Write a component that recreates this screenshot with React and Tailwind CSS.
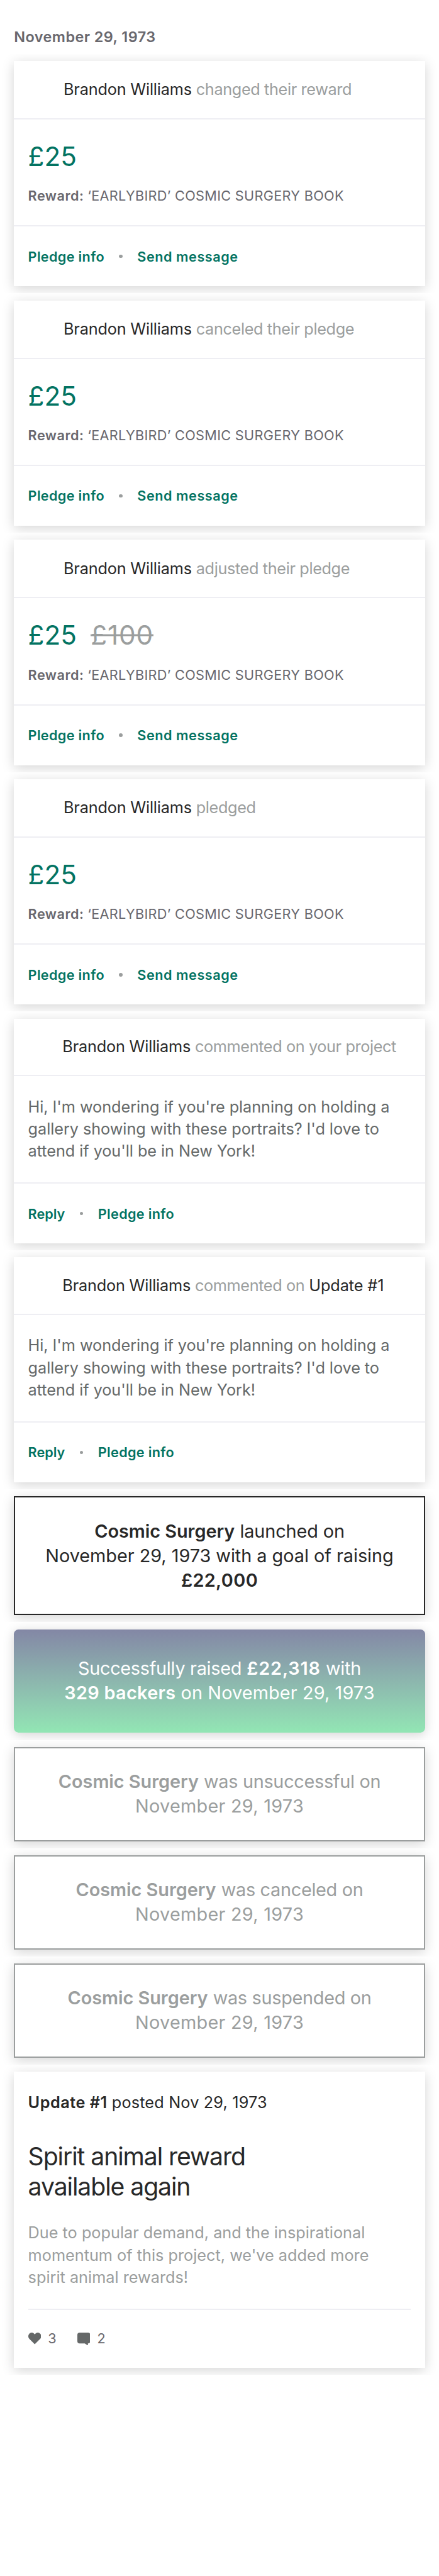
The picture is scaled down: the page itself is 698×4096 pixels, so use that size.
import React from "react";

/* A feed row: clips its card's shadow at the row's edges. */
function Cell({ children }) {
  return <div className="overflow-hidden px-[22.3px] py-[11.17px]">{children}</div>;
}

function Card({ className = "", children }) {
  return (
    <div className={`shadow-[0_3.7px_18.6px_rgba(0,0,0,0.17)] ${className}`}>{children}</div>
  );
}

function Links({ first, firstTracking, second, secondTracking }) {
  return (
    <div className="flex flex-1 items-center gap-[23.5px] px-[22.3px] text-[21.67px] leading-[26px] font-semibold text-[#037362]">
      <a className={firstTracking}>{first}</a>
      <span className="size-[5.4px] rounded-full bg-[#9b9e9e]" />
      <a className={secondTracking}>{second}</a>
    </div>
  );
}

function PledgeCard({ action, tracking = "tracking-[-0.0145em]", oldAmount }) {
  return (
    <Cell>
      <Card className="flex h-[358.4px] flex-col bg-white">
        <div className="flex h-[93.1px] items-center border-b-2 border-[#eeeef3] pl-[78.7px] text-[25.28px] leading-[32px] whitespace-pre">
          <span className="tracking-[-0.0074em] text-[#282828]">Brandon Williams </span>
          <span className={`text-[#9b9e9e] ${tracking}`}>{action}</span>
        </div>
        <div className="h-[170.4px] border-b-2 border-[#eeeef3] px-[22.3px] pt-[33px]">
          <div className="flex gap-[22.3px] text-[42.3px] leading-[52.2px]">
            <span className="text-[#037362]">£25</span>
            {oldAmount && (
              <span className="relative tracking-[0.02em] text-[#9b9e9e]">
                {oldAmount}
                <span className="absolute top-1/2 left-0 h-[3px] w-full -translate-y-1/2 bg-[#9b9e9e]" />
              </span>
            )}
          </div>
          <div className="mt-[23px] text-[21.67px] leading-[26px] whitespace-pre text-[#69686e]">
            <span className="font-semibold tracking-[0.0218em]">Reward: </span>
            <span className="tracking-[0.0145em]">‘EARLYBIRD’ COSMIC SURGERY BOOK</span>
          </div>
        </div>
        <Links
          first="Pledge info"
          firstTracking="tracking-[0.0148em]"
          second="Send message"
          secondTracking="tracking-[0.0245em]"
        />
      </Card>
    </Cell>
  );
}

function CommentCard({ action, target }) {
  return (
    <Cell>
      <Card className="flex h-[357.5px] flex-col bg-white">
        <div className="flex h-[91.2px] items-center border-b-2 border-[#eeeef3] pl-[77px] text-[25.28px] leading-[32px] whitespace-pre">
          <span className="tracking-[-0.0074em] text-[#282828]">Brandon Williams </span>
          <span className="tracking-[-0.0155em] text-[#9b9e9e]">{action}</span>
          {target && <span className="tracking-[-0.004em] text-[#282828]"> {target}</span>}
        </div>
        <div className="flex h-[171.3px] flex-col justify-center border-b-2 border-[#eeeef3] px-[22.3px] text-[25.28px] leading-[35.25px] tracking-[-0.0025em] text-[#656969]">
          <p>
            Hi, I'm wondering if you're planning on holding a
            <br />
            gallery showing with these portraits? I'd love to
            <br />
            attend if you'll be in New York!
          </p>
        </div>
        <Links
          first="Reply"
          firstTracking="tracking-[0em]"
          second="Pledge info"
          secondTracking="tracking-[0.0148em]"
        />
      </Card>
    </Cell>
  );
}

function EndedCard({ state }) {
  return (
    <Cell>
      <Card className="h-[149.9px] border-2 border-[#9b9e9e] bg-white pt-[33px] text-center text-[28.89px] leading-[39px] text-[#9b9e9e]">
        <b className="font-semibold tracking-[-0.0015em]">Cosmic Surgery</b>{" "}
        <span className="tracking-[-0.011em]">{state} on</span>
        <br />
        <span className="tracking-[0.0084em]">November 29, 1973</span>
      </Card>
    </Cell>
  );
}

export default function App() {
  return (
    <div className="h-[4096px] w-[698px] bg-white font-['Inter','Liberation_Sans',sans-serif]">
      <h2 className="h-[85.65px] pt-[44.2px] pl-[22.3px] text-[23.47px] leading-[30px] font-semibold tracking-[0.0176em] text-[#69686e]">
        November 29, 1973
      </h2>

      <PledgeCard action="changed their reward" />
      <PledgeCard action="canceled their pledge" />
      <PledgeCard action="adjusted their pledge" oldAmount="£100" />
      <PledgeCard action="pledged" />
      <CommentCard action="commented on your project" />
      <CommentCard action="commented on" target="Update #1" />

      <Cell>
        <Card className="h-[189px] border-2 border-[#282828] bg-white pt-[33.4px] text-center text-[28.89px] leading-[39px] text-[#282828]">
          <b className="font-semibold tracking-[-0.0015em]">Cosmic Surgery</b>{" "}
          <span className="tracking-[-0.0047em]">launched on</span>
          <br />
          <span className="tracking-[-0.0017em]">November 29, 1973 with a goal of raising</span>
          <br />
          <b className="font-semibold tracking-[0.0123em]">£22,000</b>
        </Card>
      </Cell>

      <Cell>
        <Card className="h-[164.8px] rounded-[7.4px] bg-linear-to-b from-[#8387a5] to-[#92e6b4] pt-[42.6px] text-center text-[28.89px] leading-[39px] text-white">
          <span className="tracking-[-0.0106em]">Successfully raised</span>{" "}
          <b className="font-semibold tracking-[0.0293em]">£22,318</b>{" "}
          <span className="tracking-[-0.01em]">with</span>
          <br />
          <b className="font-semibold tracking-[0.0098em]">329 backers</b>{" "}
          <span className="tracking-[0.0032em]">on November 29, 1973</span>
        </Card>
      </Cell>

      <EndedCard state="was unsuccessful" />
      <EndedCard state="was canceled" />
      <EndedCard state="was suspended" />

      <Cell>
        <Card className="flex h-[471px] flex-col bg-white px-[22.3px] pt-[33.4px]">
          <div className="text-[25.28px] leading-[31.6px] text-[#282828]">
            <b className="font-semibold tracking-[0.0197em]">Update #1</b>{" "}
            <span className="tracking-[0.0062em]">posted Nov 29, 1973</span>
          </div>
          <h3 className="mt-[45.6px] text-[39.2px] leading-[47.7px] tracking-[-0.028em] text-[#282828]">
            Spirit animal reward
            <br />
            available again
          </h3>
          <p className="mt-[33.2px] text-[25.28px] leading-[35.3px] text-[#9b9e9e]">
            Due to popular demand, and the inspirational
            <br />
            momentum of this project, we've added more
            <br />
            spirit animal rewards!
          </p>
          <div className="mt-[31.6px] flex border-t-2 border-[#eeeef3] pt-[32.4px] text-[21.67px] leading-[26px] text-[#69686e]">
            <div className="flex w-[78.2px] items-center gap-[11.2px]">
              <svg viewBox="0 0 22 20" className="h-[18.6px] w-[20.5px] fill-[#656868]">
                <path d="M11 20 L1.8 10.8 C-0.6 8.2 -0.6 4.2 1.7 1.8 C4 -0.6 7.7 -0.6 9.9 1.8 L11 3 L12.1 1.8 C14.3 -0.6 18 -0.6 20.3 1.8 C22.6 4.2 22.6 8.2 20.2 10.8 Z" />
              </svg>
              3
            </div>
            <div className="flex items-center gap-[11.2px]">
              <svg viewBox="0 0 22 22" className="mt-[1.6px] h-[20.5px] w-[20.5px] fill-[#656868]">
                <path d="M4 0 H18 A4 4 0 0 1 22 4 V14.6 A4 4 0 0 1 18 18.6 V22 L12.6 18.6 H4 A4 4 0 0 1 0 14.6 V4 A4 4 0 0 1 4 0 Z" />
              </svg>
              2
            </div>
          </div>
        </Card>
      </Cell>
    </div>
  );
}
